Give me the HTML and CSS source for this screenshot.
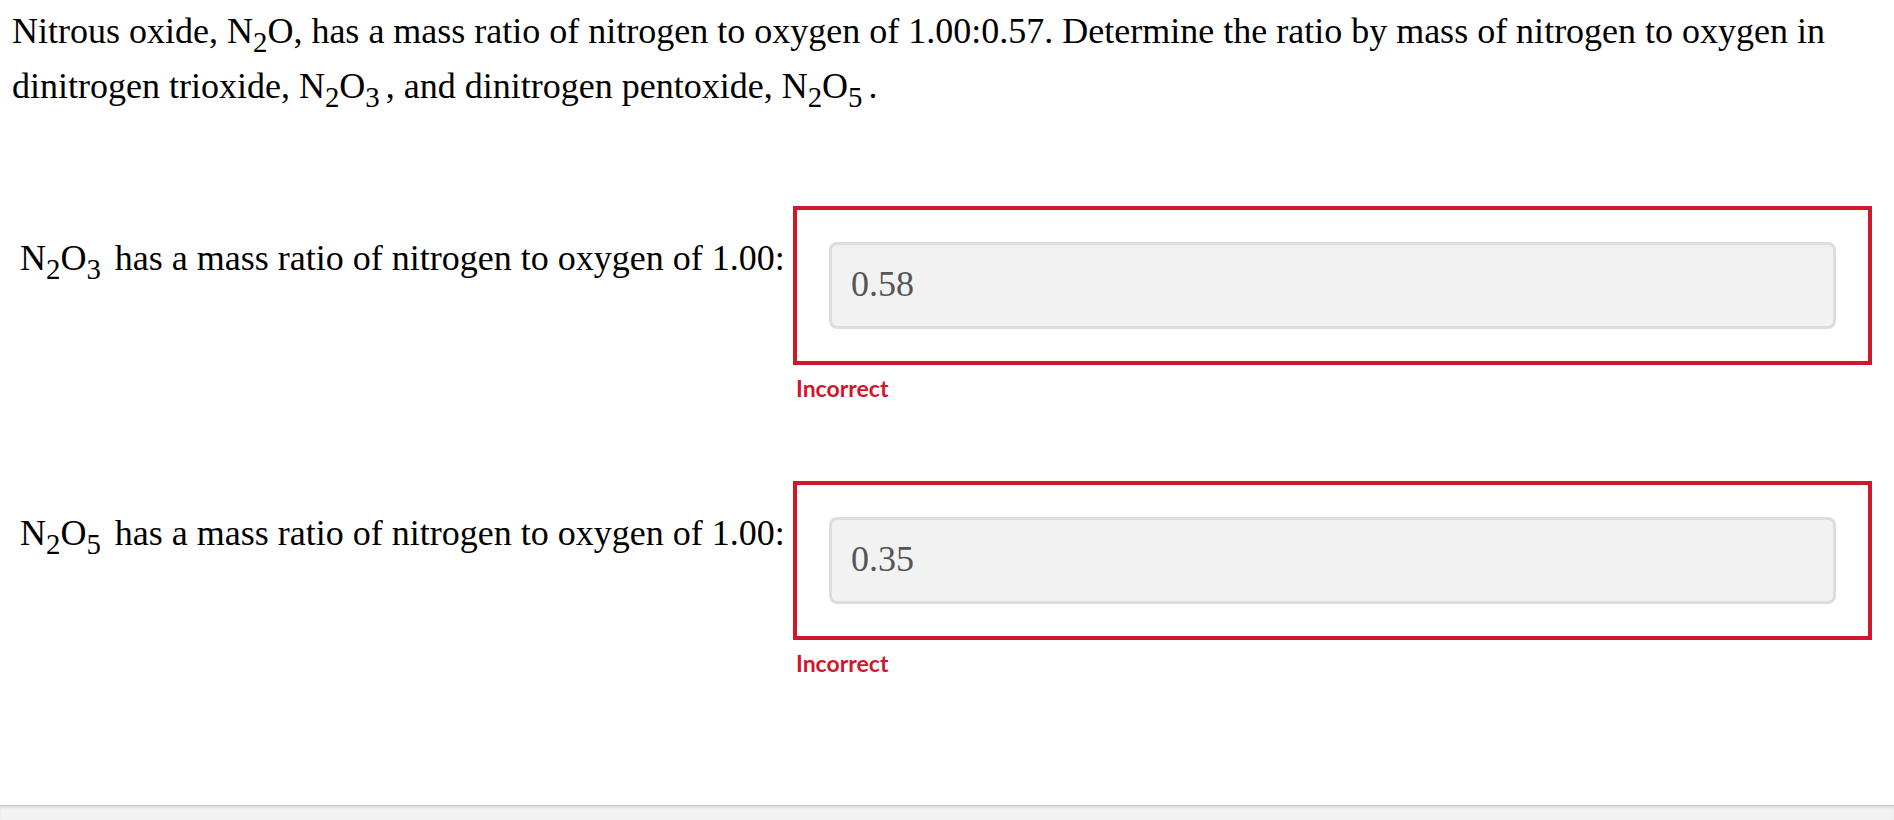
FILE: index.html
```html
<!DOCTYPE html>
<html lang="en">
<head>
<meta charset="utf-8">
<title>Mass ratio question</title>
<link rel="stylesheet" href="styles.css">
</head>
<body>
<div class="page">
  <p class="prompt">Nitrous oxide, N<span class="sub">2</span>O, has a mass ratio of nitrogen to oxygen of 1.00:0.57. Determine the ratio by mass of nitrogen to oxygen in dinitrogen trioxide, N<span class="sub">2</span>O<span class="sub">3</span><span class="thin">,</span> and dinitrogen pentoxide, N<span class="sub">2</span>O<span class="sub">5</span><span class="thin">.</span></p>

  <div class="answers">
    <div class="row">
      <div class="label">N<span class="sub">2</span>O<span class="sub">3</span><span class="gap"></span>has a mass ratio of nitrogen to oxygen of 1.00:</div>
      <div class="field">
        <div class="box"><div class="input">0.58</div></div>
        <div class="feedback">Incorrect</div>
      </div>
    </div>
    <div class="row">
      <div class="label">N<span class="sub">2</span>O<span class="sub">5</span><span class="gap"></span>has a mass ratio of nitrogen to oxygen of 1.00:</div>
      <div class="field">
        <div class="box"><div class="input">0.35</div></div>
        <div class="feedback">Incorrect</div>
      </div>
    </div>
  </div>
</div>
<div class="footer"></div>
</body>
</html>
```
FILE: styles.css
```css
html, body {
  margin: 0;
  padding: 0;
  background: #ffffff;
}
body {
  width: 1894px;
  height: 820px;
  overflow: hidden;
  display: flex;
  flex-direction: column;
}
.page {
  flex: 1;
  font-family: "Liberation Serif", "Times New Roman", serif;
  color: #000;
}
.prompt {
  margin: 0;
  padding: 4px 12px 0 12px;
  font-size: 36px;
  line-height: 55px;
  height: 114px;
  width: 1840px;
}
.sub {
  font-size: 0.8em;
  position: relative;
  top: 0.3em;
  line-height: 0;
}
.thin {
  margin-left: 6px;
}
.gap {
  display: inline-block;
  width: 14px;
}
.answers {
  margin-top: 88px;
  display: flex;
  flex-direction: column;
  gap: 80px;
}
.row {
  display: flex;
  align-items: flex-start;
  padding-left: 20px;
  padding-right: 22px;
}
.label {
  width: 773px;
  flex: none;
  padding-top: 32px;
  font-size: 36px;
  line-height: 41px;
  white-space: nowrap;
}
.field {
  flex: 1;
}
.box {
  border: 4px solid #d0172b;
  padding: 32px;
}
.input {
  box-sizing: border-box;
  height: 87px;
  border: 3px solid #dddddd;
  border-radius: 8px;
  background: #f2f2f2;
  padding-left: 19px;
  padding-bottom: 3px;
  display: flex;
  align-items: center;
  font-family: "Liberation Serif", "Times New Roman", serif;
  font-size: 36px;
  color: #555555;
}
.feedback {
  margin-top: 10px;
  padding-left: 3px;
  font-family: "Lato", "Open Sans", sans-serif;
  font-weight: 700;
  font-size: 23px;
  line-height: 26px;
  color: #d0172b;
}
.footer {
  height: 14px;
  background: #f2f2f2;
  border-top: 1px solid #c4c4c4;
  box-shadow: inset 0 2px 2px rgba(0,0,0,0.08);
}
```
